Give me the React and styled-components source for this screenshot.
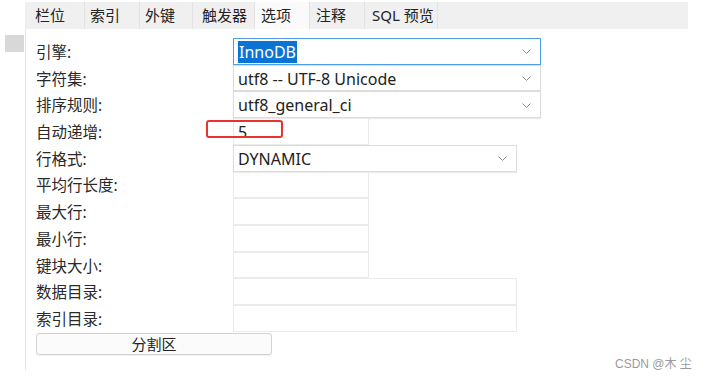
import React from 'react';
import styled, { createGlobalStyle } from 'styled-components';

const GlobalStyle = createGlobalStyle`
  body {
    margin: 0;
    background: #fff;
    font-family: "Noto Sans", "Noto Sans CJK SC", sans-serif;
    color: #222;
  }
`;

const Page = styled.div`
  position: relative;
  width: 708px;
  height: 379px;
  overflow: hidden;
`;

const TabBar = styled.div`
  display: flex;
  margin: 2px 0 0 25px;
  width: 663px;
  height: 27px;
  background: #f0f0f0;
`;

const Tab = styled.div`
  box-sizing: border-box;
  width: ${(p) => p.$w}px;
  padding-left: ${(p) => p.$pl || 6}px;
  border-right: 1px solid #e2e2e2;
  background: ${(p) => (p.$active ? '#fafafa' : 'transparent')};
  font-size: 15px;
  line-height: 27px;
  white-space: nowrap;
`;

const Body = styled.div`
  display: flex;
  height: 341px;
`;

const Gutter = styled.div`
  width: 25px;
  flex: none;
`;

const GraySquare = styled.div`
  margin: 6px 0 0 5px;
  width: 19px;
  height: 17px;
  background: #d8d8d8;
`;

const Panel = styled.div`
  flex: 1;
  border-left: 1px solid #e6e6e6;
  padding: 9px 0 0 10px;
`;

const Form = styled.div`
  display: grid;
  grid-template-columns: 197px auto;
  grid-auto-rows: 26.73px;
`;

const Label = styled.div`
  display: flex;
  align-items: center;
  font-size: 15.5px;
  color: #2a2a2a;
`;

const Cell = styled.div`
  position: relative;
  box-sizing: border-box;
  width: ${(p) => p.$w}px;
  display: flex;
  align-items: center;
  padding: 1px 0 0 4px;
  font-size: 16px;
  background: #fff;
  border: 1px solid ${(p) => (p.$focus ? '#4d9fe6' : p.$select ? '#dcdcdc' : '#ebebeb')};
  box-shadow: ${(p) => (p.$select ? '0 1px 1px rgba(0,0,0,0.08)' : 'none')};
`;

const Highlight = styled.span`
  background: #0a74d6;
  color: #fff;
  padding: 0 1px;
`;

const Chevron = styled.svg`
  position: absolute;
  right: 9px;
  top: 50%;
  margin-top: -2px;
`;

const RedMark = styled.div`
  position: absolute;
  left: -28px;
  top: 1px;
  width: 77px;
  height: 18px;
  box-sizing: border-box;
  border: 2px solid #e8342c;
  border-radius: 3px;
`;

const Button = styled.div`
  margin-top: 1px;
  width: 236px;
  height: 22px;
  box-sizing: border-box;
  border: 1px solid #d2d2d2;
  border-radius: 3px;
  background: #fbfbfb;
  box-shadow: 0 1px 1px rgba(0,0,0,0.06);
  text-align: center;
  font-size: 15px;
  line-height: 20px;
`;

const Watermark = styled.div`
  position: absolute;
  left: 615px;
  top: 354px;
  font-size: 12px;
  color: #9a9a9a;
  font-family: "Liberation Sans", "Noto Sans CJK SC", sans-serif;
`;

const Arrow = () => (
  <Chevron width="9" height="5" viewBox="0 0 9 5">
    <polyline points="0.5,0.5 4.5,4.5 8.5,0.5" fill="none" stroke="#8a8a8a" strokeWidth="1" />
  </Chevron>
);

const tabs = [
  { t: '栏位', w: 60, pl: 10 },
  { t: '索引', w: 55, pl: 5 },
  { t: '外键', w: 53, pl: 5 },
  { t: '触发器', w: 62, pl: 9 },
  { t: '选项', w: 55, pl: 6, active: true },
  { t: '注释', w: 55, pl: 6 },
  { t: 'SQL 预览', w: 73, pl: 7 },
];

const rows = [
  { label: '引擎:', w: 308, select: true, focus: true, value: <Highlight>InnoDB</Highlight> },
  { label: '字符集:', w: 308, select: true, value: 'utf8 -- UTF-8 Unicode' },
  { label: '排序规则:', w: 308, select: true, value: 'utf8_general_ci' },
  { label: '自动递增:', w: 136, value: '5', mark: true },
  { label: '行格式:', w: 284, select: true, value: 'DYNAMIC' },
  { label: '平均行长度:', w: 136 },
  { label: '最大行:', w: 136 },
  { label: '最小行:', w: 136 },
  { label: '键块大小:', w: 136 },
  { label: '数据目录:', w: 284 },
  { label: '索引目录:', w: 284 },
];

export default function App() {
  return (
    <Page>
      <GlobalStyle />
      <TabBar>
        {tabs.map((tab) => (
          <Tab key={tab.t} $w={tab.w} $pl={tab.pl} $active={tab.active}>
            {tab.t}
          </Tab>
        ))}
      </TabBar>
      <Body>
        <Gutter>
          <GraySquare />
        </Gutter>
        <Panel>
          <Form>
            {rows.map((r) => (
              <React.Fragment key={r.label}>
                <Label>{r.label}</Label>
                <Cell $w={r.w} $select={r.select} $focus={r.focus}>
                  {r.value}
                  {r.select && <Arrow />}
                  {r.mark && <RedMark />}
                </Cell>
              </React.Fragment>
            ))}
          </Form>
          <Button>分割区</Button>
        </Panel>
      </Body>
      <Watermark>CSDN @木 尘</Watermark>
    </Page>
  );
}
